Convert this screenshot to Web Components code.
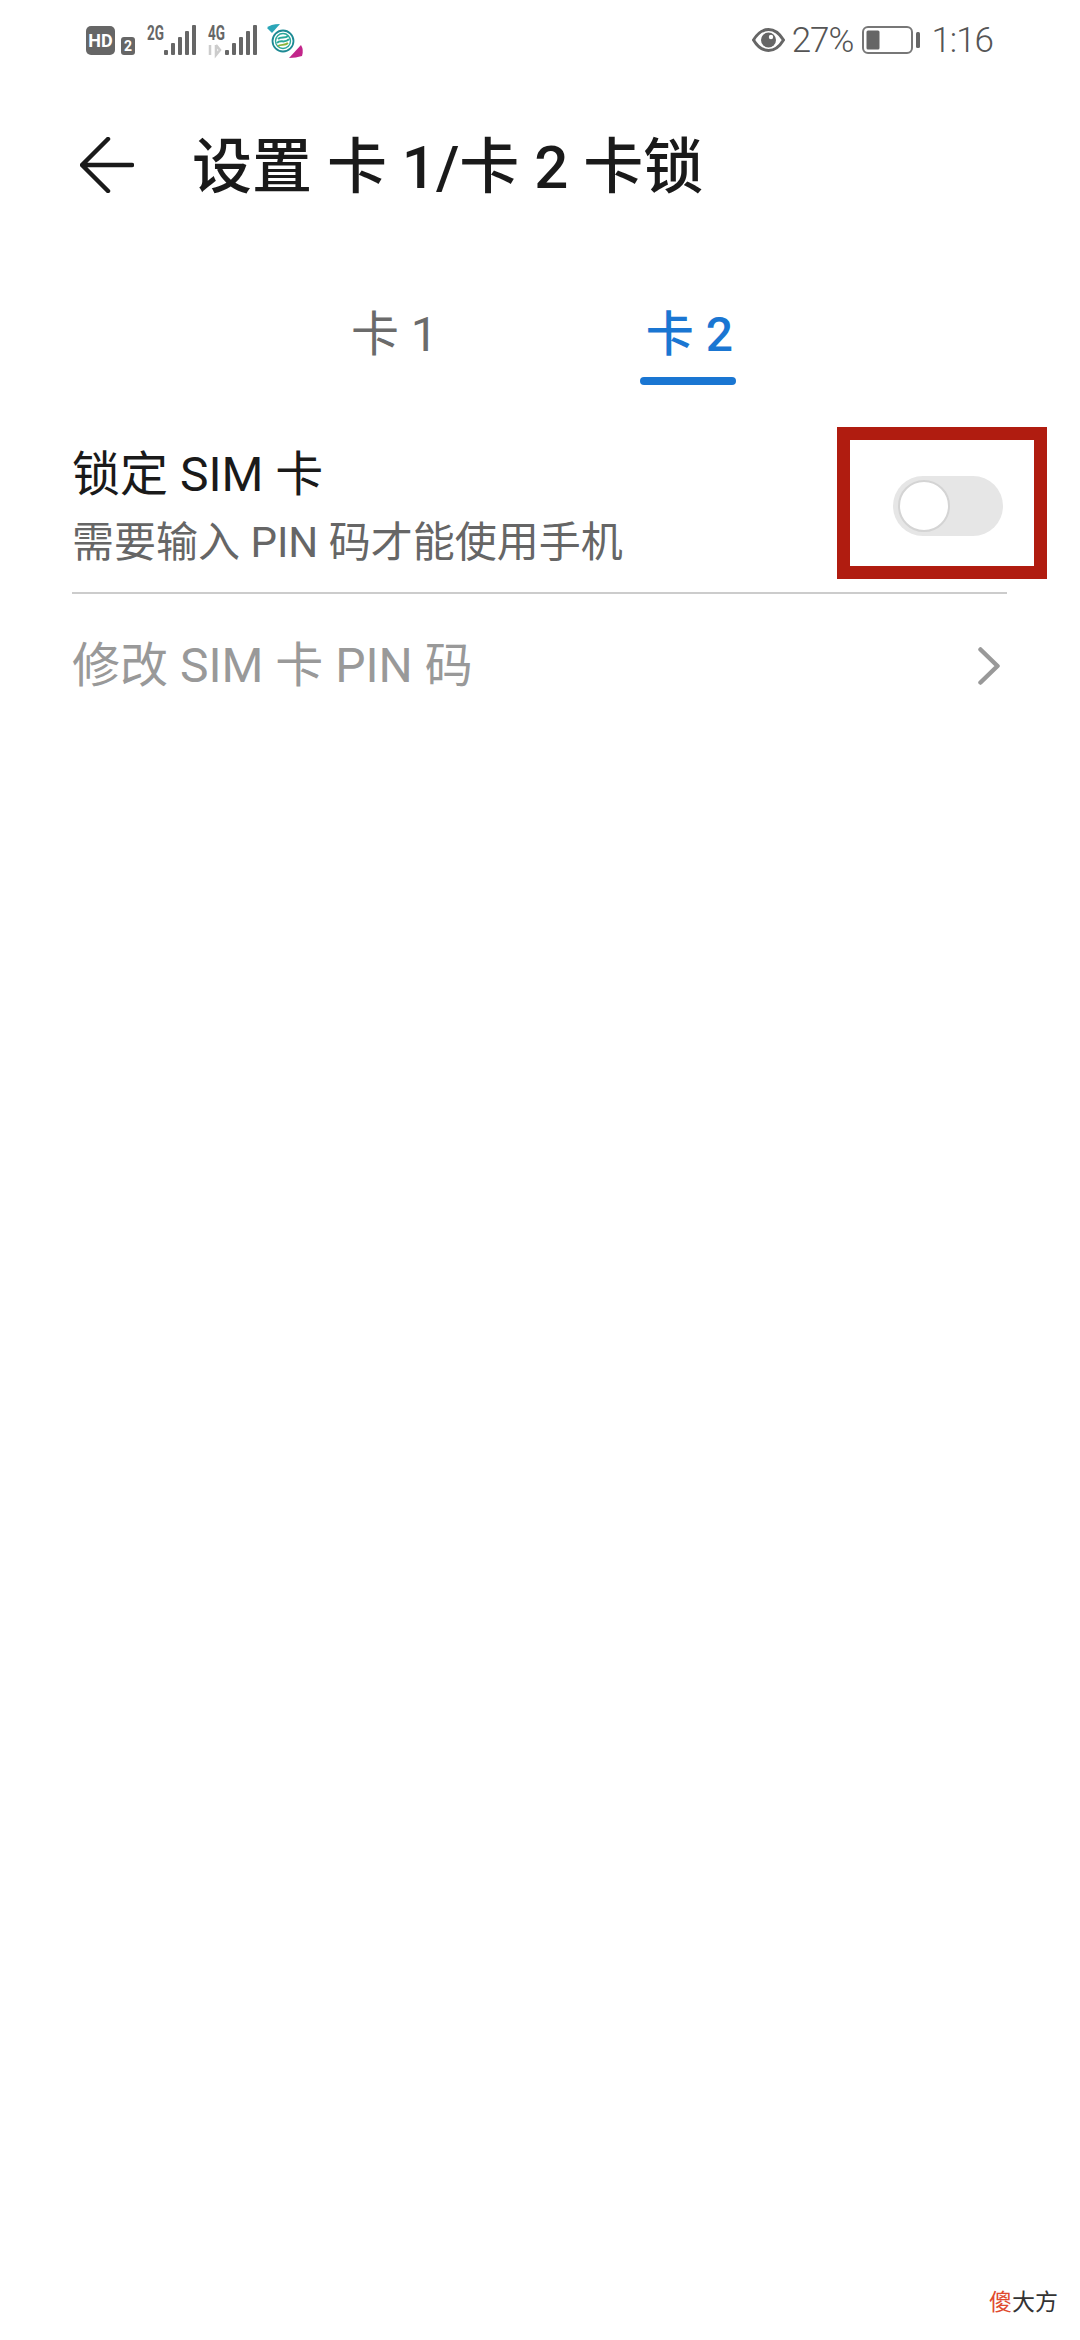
<!DOCTYPE html>
<html lang="zh">
<head>
<meta charset="utf-8">
<title>设置 卡 1/卡 2 卡锁</title>
<style>
  html, body { margin: 0; background: #fff; }
  body { font-family: Roboto, "Noto Sans CJK SC", sans-serif; }
  #page { width: 1080px; height: 2340px; display: flex; flex-direction: column; overflow: hidden; }
</style>
</head>
<body>
<div id="page">
  <status-bar></status-bar>
  <app-header>设置 卡 1/卡 2 卡锁</app-header>
  <sim-tabs></sim-tabs>
  <lock-row></lock-row>
  <link-row>修改 SIM 卡 PIN 码</link-row>
  <site-mark></site-mark>
</div>

<script>
class StatusBar extends HTMLElement {
  constructor() {
    super();
    this.attachShadow({ mode: "open" });
  }
  connectedCallback() {
    this.shadowRoot.innerHTML = `
      <style>
        :host { display: flex; justify-content: space-between; align-items: center; height: 80px; padding: 0 87px 0 86px; color: #666; }
        .left, .right { display: flex; align-items: center; }
        svg { display: block; }
        .txt { font: 300 35px/40px Roboto, sans-serif; color: #555; letter-spacing: -1px; position: relative; top: 1px; }
        .pct { margin-left: 7px; margin-right: 9px; }
        .time { margin-left: 11px; }
      </style>
      <div class="left">
        <svg width="218" height="40" viewBox="0 0 218 40">
          <rect x="0" y="6" width="29" height="29" rx="5" fill="#666"/>
          <text x="14.5" y="27" text-anchor="middle" font-family="Roboto" font-weight="700" font-size="18" fill="#fff">HD</text>
          <rect x="35" y="17" width="14" height="18" rx="3" fill="#666"/>
          <text x="42" y="31" text-anchor="middle" font-family="Roboto" font-weight="700" font-size="14" fill="#fff">2</text>

          <text x="61" y="20" font-family="Roboto" font-weight="700" font-size="20" fill="#666" textLength="17" lengthAdjust="spacingAndGlyphs">2G</text>
          <rect x="78" y="30" width="4" height="5" rx="1" fill="#666"/>
          <rect x="85" y="23" width="4" height="12" rx="1" fill="#666"/>
          <rect x="92" y="17" width="4" height="18" rx="1" fill="#666"/>
          <rect x="99" y="11" width="4" height="24" rx="1" fill="#666"/>
          <rect x="106" y="5" width="4" height="30" rx="1" fill="#666"/>

          <text x="122" y="20" font-family="Roboto" font-weight="700" font-size="20" fill="#666" textLength="17" lengthAdjust="spacingAndGlyphs">4G</text>
          <path d="M124 25v10M130 25v10l4-5-4-5" fill="none" stroke="#ccc" stroke-width="2.5"/>
          <rect x="139" y="30" width="4" height="5" rx="1" fill="#666"/>
          <rect x="146" y="23" width="4" height="12" rx="1" fill="#666"/>
          <rect x="153" y="17" width="4" height="18" rx="1" fill="#666"/>
          <rect x="160" y="11" width="4" height="24" rx="1" fill="#666"/>
          <rect x="167" y="5" width="4" height="30" rx="1" fill="#666"/>

          <path d="M181 8Q184 4 194 4L186 13Z" fill="#2ba6b8"/>
          <path d="M215 25Q218 30 216 36Q210 38 203 38Z" fill="#c2258a"/>
          <circle cx="197" cy="21" r="10.500" fill="none" stroke="#1d8a94" stroke-width="1.800"/>
          <circle cx="197" cy="21" r="7.500" fill="none" stroke="#2aa89a" stroke-width="1.400"/>
          <path d="M191 23c3-4 8 1 12-4M192 19c3-3 7 0 10-3" fill="none" stroke="#2aa89a" stroke-width="2"/>
          <path d="M192 26c3-2 7 0 10-3" fill="none" stroke="#8ab33a" stroke-width="1.800"/>
        </svg>
      </div>
      <div class="right">
        <svg width="33" height="26" viewBox="0 0 33 26">
          <path d="M1.500 13C6 5.500 11 2.500 16.500 2.500S27 5.500 31.500 13C27 20.500 22 23.500 16.500 23.500S6 20.500 1.500 13Z" fill="none" stroke="#666" stroke-width="3"/>
          <circle cx="16.500" cy="13" r="7.500" fill="#666"/>
          <circle cx="19" cy="10" r="2.200" fill="#fff"/>
        </svg>
        <span class="txt pct">27%</span>
        <svg width="58" height="28" viewBox="0 0 58 28">
          <rect x="1" y="1" width="49" height="26" rx="5" fill="none" stroke="#777" stroke-width="2"/>
          <rect x="4.500" y="4.500" width="13" height="19" rx="1.500" fill="#666"/>
          <rect x="54" y="6" width="4" height="16" rx="1.500" fill="#666"/>
        </svg>
        <span class="txt time">1:16</span>
      </div>
    `;
  }
}

class AppHeader extends HTMLElement {
  constructor() {
    super();
    this.attachShadow({ mode: "open" });
  }
  connectedCallback() {
    this.shadowRoot.innerHTML = `
      <style>
        :host { display: flex; align-items: center; height: 176px; padding-left: 80px; color: #1a1a1a; }
        svg { display: block; flex: none; margin-bottom: 6px; }
        h1 { margin: 0 0 0 58px; font: 500 60px/80px Roboto, "Noto Sans CJK SC", sans-serif; white-space: nowrap; }
      </style>
      <svg width="54" height="56" viewBox="0 0 54 56">
        <path d="M52 28H3M28 2 2 28l26 26" fill="none" stroke="#1a1a1a" stroke-width="4.500" stroke-linecap="round" stroke-linejoin="round"/>
      </svg>
      <h1><slot></slot></h1>
    `;
  }
}

class SimTabs extends HTMLElement {
  constructor() {
    super();
    this.attachShadow({ mode: "open" });
  }
  connectedCallback() {
    this.shadowRoot.innerHTML = `
      <style>
        :host { display: flex; justify-content: center; gap: 208px; height: 120px; padding: 44px 0 0 4px; box-sizing: content-box; font: 400 48px/70px Roboto, "Noto Sans CJK SC", sans-serif; }
        .tab { position: relative; color: #6b6b6b; white-space: nowrap; }
        .on { color: #1a76d2; font-weight: 500; }
        .on::after { content: ""; display: block; height: 8px; margin: 7px -3px 0 -6px; border-radius: 4px; background: #1a76d2; }
      </style>
      <div class="tab">卡 1</div>
      <div class="tab on">卡 2</div>
    `;
  }
}

class LockRow extends HTMLElement {
  constructor() {
    super();
    this.attachShadow({ mode: "open" });
  }
  connectedCallback() {
    this.shadowRoot.innerHTML = `
      <style>
        :host { display: flex; justify-content: space-between; align-items: center; position: relative; height: 172px; margin: 0 73px 0 72px; border-bottom: 2px solid #ccc; }
        .title { margin-top: 3px; font: 400 48px/64px Roboto, "Noto Sans CJK SC", sans-serif; color: #1a1a1a; }
        .sub { margin-top: 6px; font: 400 42px/60px Roboto, "Noto Sans CJK SC", sans-serif; color: #666; }
        .toggle { width: 110px; height: 60px; margin-right: 4px; border-radius: 30px; background: #e6e6e6; padding: 4px 0 0 5px; box-sizing: border-box; }
        .knob { width: 52px; height: 52px; border-radius: 50%; background: #fff; box-sizing: border-box; border: 2px solid #d4d4d4; }
        .mark { position: absolute; left: 765px; top: 7px; width: 210px; height: 152px; box-sizing: border-box; border: 13px solid #b01c10; }
      </style>
      <div>
        <div class="title">锁定 SIM 卡</div>
        <div class="sub">需要输入 PIN 码才能使用手机</div>
      </div>
      <div class="toggle"><div class="knob"></div></div>
      <div class="mark"></div>
    `;
  }
}

class LinkRow extends HTMLElement {
  constructor() {
    super();
    this.attachShadow({ mode: "open" });
  }
  connectedCallback() {
    this.shadowRoot.innerHTML = `
      <style>
        :host { display: flex; justify-content: space-between; align-items: center; height: 144px; margin: 0 80px 0 72px; font: 400 48px/64px Roboto, "Noto Sans CJK SC", sans-serif; color: #999; }
        svg { display: block; }
      </style>
      <span><slot></slot></span>
      <svg width="22" height="38" viewBox="0 0 22 38">
        <path d="M2.500 2.500 19.500 19 2.500 35.500" fill="none" stroke="#999" stroke-width="4.500" stroke-linecap="round" stroke-linejoin="round"/>
      </svg>
    `;
  }
}

class SiteMark extends HTMLElement {
  constructor() {
    super();
    this.attachShadow({ mode: "open" });
  }
  connectedCallback() {
    this.shadowRoot.innerHTML = `
      <style>
        :host { display: block; margin-top: auto; padding: 0 22px 26px 0; text-align: right; font: 400 23px/28px "Noto Sans CJK SC", sans-serif; color: #333; }
        b { font-weight: 400; color: #e04a2f; }
      </style>
      <b>傻</b>大方
    `;
  }
}

customElements.define("status-bar", StatusBar);
customElements.define("app-header", AppHeader);
customElements.define("sim-tabs", SimTabs);
customElements.define("lock-row", LockRow);
customElements.define("link-row", LinkRow);
customElements.define("site-mark", SiteMark);
</script>
</body>
</html>
